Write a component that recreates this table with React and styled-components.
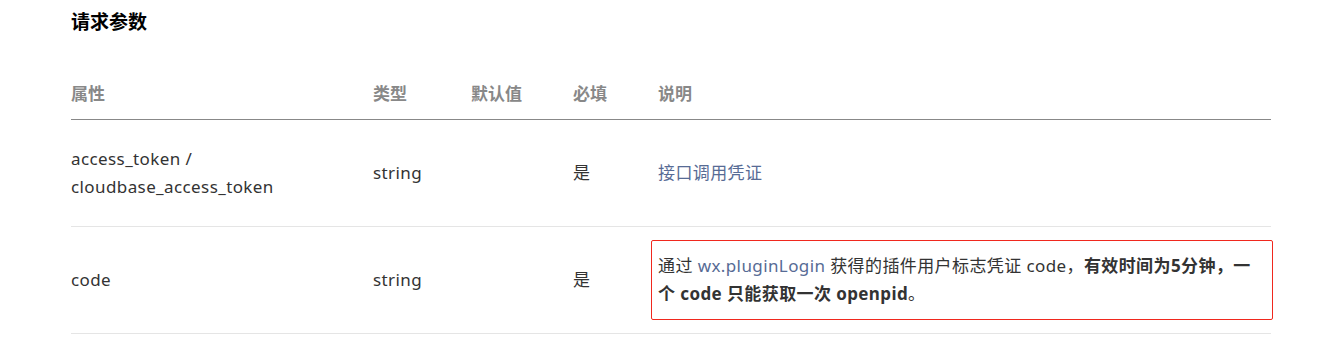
import React from "react";
import styled, { createGlobalStyle } from "styled-components";

const GlobalStyle = createGlobalStyle`
  body {
    margin: 0;
    background: #fff;
    font-family: "Noto Sans", "Noto Sans CJK SC", sans-serif;
    color: #333;
  }
`;

const Page = styled.div`
  width: 1200px;
  padding: 8px 0 0 71px;
`;

const Title = styled.h3`
  margin: 0;
  font-size: 19px;
  line-height: 28px;
  font-weight: 700;
  color: #000;
`;

const Table = styled.div`
  margin-top: 44px;
`;

const Row = styled.div`
  display: grid;
  grid-template-columns: 302px 98px 102px 85px 1fr;
  align-items: center;
  min-height: ${(p) => (p.head ? "auto" : "106px")};
  padding: ${(p) => (p.head ? "0 0 11px" : "0")};
  border-bottom: 1px solid ${(p) => (p.head ? "#888" : "#e5e5e5")};
`;

const HeadCell = styled.div`
  font-size: 17px;
  line-height: 28px;
  font-weight: 700;
  color: #888;
`;

const Cell = styled.div`
  font-size: 17px;
  line-height: 28px;
  letter-spacing: 0.4px;
  color: #333;
`;

const Link = styled.span`
  color: #576b95;
`;

const Marked = styled.div`
  margin: 0 -2px 0 -7px;
  padding: 11px 6px;
  border: 1px solid #f0281e;
  border-radius: 2px;
`;

const columns = ["属性", "类型", "默认值", "必填", "说明"];

export default function App() {
  return (
    <>
      <GlobalStyle />
      <Page>
        <Title>请求参数</Title>
        <Table>
          <Row head>
            {columns.map((c) => (
              <HeadCell key={c}>{c}</HeadCell>
            ))}
          </Row>
          <Row>
            <Cell>
              access_token /<br />
              cloudbase_access_token
            </Cell>
            <Cell>string</Cell>
            <Cell />
            <Cell>是</Cell>
            <Cell>
              <Link>接口调用凭证</Link>
            </Cell>
          </Row>
          <Row>
            <Cell>code</Cell>
            <Cell>string</Cell>
            <Cell />
            <Cell>是</Cell>
            <Cell>
              <Marked>
                通过 <Link>wx.pluginLogin</Link> 获得的插件用户标志凭证 code，
                <b>有效时间为5分钟，一个 code 只能获取一次 openpid</b>。
              </Marked>
            </Cell>
          </Row>
        </Table>
      </Page>
    </>
  );
}
